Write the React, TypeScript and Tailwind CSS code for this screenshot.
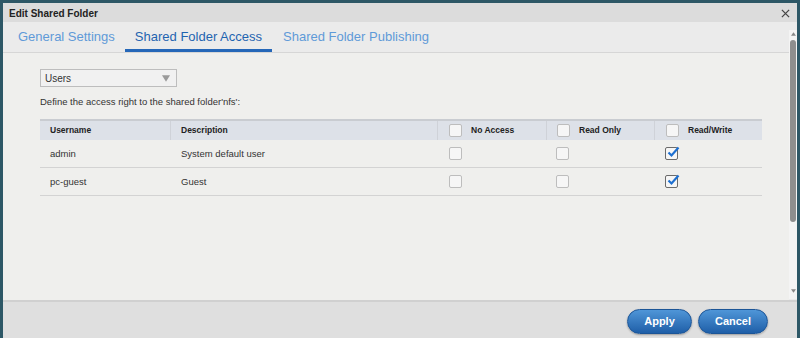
const users = [
    {name: "admin", desc: "System default user"},
    {name: "pc-guest", desc: "Guest"},
];

const Box = ({checked}: {checked?: boolean}) => (
    <span
        className={
            "relative inline-block w-[13px] h-[13px] rounded-[2px] border bg-[#f6f6f6] " +
            (checked ? "border-[#6b6b6b]" : "border-[#bdbdbd]")
        }
    >
        {checked && (
            <svg viewBox="0 0 14 14" className="absolute left-[0px] top-[-3px] w-[14px] h-[14px]">
                <path d="M2.5 7.5 L5.5 10.5 L12.5 2.5" fill="none" stroke="#1d6fd0" strokeWidth="2.2"/>
            </svg>
        )}
    </span>
);

const App = () => {
    return (
        <div
            className="w-[800px] h-[338px] bg-[#2d5766] pt-[3px] px-[3px] overflow-hidden"
            style={{fontFamily: '"Liberation Sans", Arial, sans-serif'}}
        >
            <div className="h-[335px] flex flex-col bg-[#eeeeec]">
                {/* title bar */}
                <div className="h-[19px] shrink-0 bg-[#dcdcdc] flex items-center justify-between pl-[6px] pr-[7px] pt-[1px]">
                    <span className="text-[10px] font-bold text-[#222]">Edit Shared Folder</span>
                    <svg viewBox="0 0 10 10" className="w-[9px] h-[9px]">
                        <path d="M1 1 L9 9 M9 1 L1 9" stroke="#444" strokeWidth="1.4"/>
                    </svg>
                </div>

                <div className="flex flex-1 min-h-0">
                    <div className="flex-1 flex flex-col min-w-0">
                        {/* tabs */}
                        <div className="h-[31px] shrink-0 bg-[#ebebeb] border-b border-[#d6d6d6] flex items-end pl-[5px]">
                            <div className="px-[10px] h-full flex items-center text-[13px] text-[#5f9ad8]">General Settings</div>
                            <div className="px-[10px] h-full flex items-center text-[13px] text-[#1f64b0] border-b-[3px] border-[#2567b8] pt-[3px]">
                                Shared Folder Access
                            </div>
                            <div className="ml-[11px] h-full flex items-center text-[13px] text-[#5f9ad8]">Shared Folder Publishing</div>
                        </div>

                        {/* content */}
                        <div className="flex-1 pl-[37px] pr-[27px] pt-[16px] bg-[#efefed]">
                            <div className="w-[137px] h-[18px] border border-[#bdbdbd] bg-[#f1f1f1] flex items-center justify-between pl-[4px] pr-[6px]">
                                <span className="text-[10px] text-[#333]">Users</span>
                                <svg viewBox="0 0 10 8" className="w-[8px] h-[7px]">
                                    <path d="M0 0 L10 0 L5 8 Z" fill="#9a9a9a"/>
                                </svg>
                            </div>
                            <div className="mt-[8px] text-[9.5px] text-[#333]">Define the access right to the shared folder'nfs':</div>

                            <div className="mt-[10px] w-[722px] text-[9.5px] text-[#333]">
                                <div className="h-[21px] flex bg-[#dde1e8] border-t-2 border-[#c9ccd1] font-bold text-[8.5px] text-[#222]">
                                    <div className="w-[130px] pl-[10px] flex items-center">Username</div>
                                    <div className="w-[267px] pl-[10px] flex items-center border-l border-[#cfd2d8]">Description</div>
                                    <div className="w-[109px] pl-[11px] flex items-center gap-[9px] border-l border-[#cfd2d8]"><Box/>No Access</div>
                                    <div className="w-[108px] pl-[10px] flex items-center gap-[9px] border-l border-[#cfd2d8]"><Box/>Read Only</div>
                                    <div className="flex-1 pl-[11px] flex items-center gap-[9px] border-l border-[#cfd2d8]"><Box/>Read/Write</div>
                                </div>
                                {users.map((u) => (
                                    <div key={u.name} className="h-[28px] flex border-b border-[#d3d3d3]">
                                        <div className="w-[130px] pl-[10px] flex items-center">{u.name}</div>
                                        <div className="w-[267px] pl-[11px] flex items-center">{u.desc}</div>
                                        <div className="w-[109px] pl-[12px] flex items-center"><Box/></div>
                                        <div className="w-[108px] pl-[10px] flex items-center"><Box/></div>
                                        <div className="flex-1 pl-[11px] flex items-center"><Box checked/></div>
                                    </div>
                                ))}
                            </div>
                        </div>
                    </div>

                    {/* scrollbar */}
                    <div className="w-[8px] shrink-0 flex flex-col pt-[8px] pb-[1px] bg-[#ebebeb]">
                        <div className="flex-1 flex flex-col items-center bg-[#f4f4f4]">
                            <svg viewBox="0 0 6 4" className="w-[5px] h-[4px] mt-[2px]"><path d="M0 4 L3 0 L6 4 Z" fill="#888"/></svg>
                            <div className="mt-[4px] w-[6px] h-[182px] rounded-[3px] bg-[#8e8e8e]"/>
                            <div className="flex-1"/>
                            <svg viewBox="0 0 6 4" className="w-[5px] h-[4px] mb-[6px]"><path d="M0 0 L6 0 L3 4 Z" fill="#888"/></svg>
                        </div>
                    </div>
                </div>

                {/* footer */}
                <div className="h-[38px] shrink-0 bg-[#dfdfdf] border-t-2 border-[#d0d0d0] flex items-center justify-end gap-[6px] pr-[29px] pt-[2px]">
                    <button className="w-[65px] h-[25px] rounded-full bg-gradient-to-b from-[#4f96d8] to-[#1f5fa8] border border-[#1c5597] text-white text-[11px] font-bold shadow-[0_1px_2px_rgba(0,0,0,0.3)]">
                        Apply
                    </button>
                    <button className="w-[70px] h-[25px] rounded-full bg-gradient-to-b from-[#4f96d8] to-[#1f5fa8] border border-[#1c5597] text-white text-[11px] font-bold shadow-[0_1px_2px_rgba(0,0,0,0.3)]">
                        Cancel
                    </button>
                </div>
            </div>
        </div>
    );
};

export default App;
